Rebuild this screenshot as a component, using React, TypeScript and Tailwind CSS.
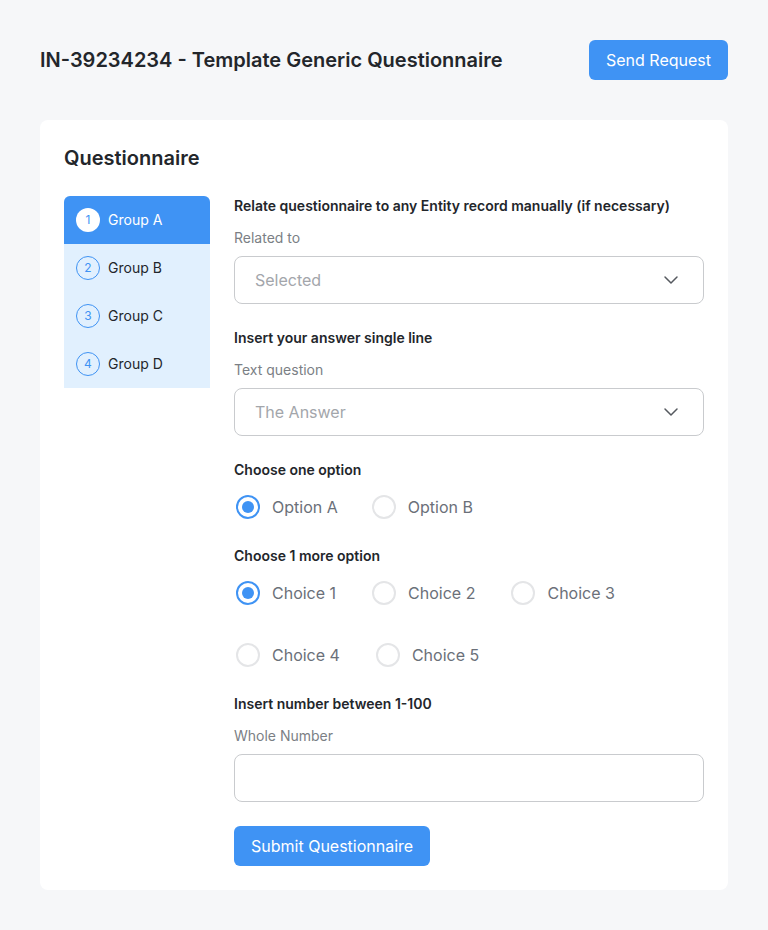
import { ChevronDown } from 'lucide-react'

const groups = ['Group A', 'Group B', 'Group C', 'Group D']

function Radio({ label, checked }: { label: string; checked?: boolean }) {
  return (
    <label className="flex h-[30px] items-center gap-3 pl-0.5">
      <span
        className={`flex h-6 w-6 items-center justify-center rounded-full border-2 ${
          checked ? 'border-[#3f93f4]' : 'border-[#e4e5e7]'
        }`}
      >
        {checked && <span className="h-3 w-3 rounded-full bg-[#3f93f4]" />}
      </span>
      <span className="text-base text-[#6b7079]">{label}</span>
    </label>
  )
}

function SelectBox({ placeholder }: { placeholder: string }) {
  return (
    <div className="flex h-12 items-center justify-between rounded-lg border border-[#c9cbce] pl-5 pr-5">
      <span className="text-base text-[#a3a6ab]">{placeholder}</span>
      <ChevronDown className="h-6 w-6 text-[#55595f]" strokeWidth={1.5} />
    </div>
  )
}

export default function App() {
  return (
    <div className="min-h-[930px] bg-[#f6f7f9] px-10 pt-10 pb-10 font-['Inter',sans-serif] text-[#23262b]">
      <div className="flex items-center justify-between">
        <h1 className="text-xl font-semibold">IN-39234234 - Template Generic Questionnaire</h1>
        <button className="h-10 rounded-md bg-[#3f93f4] px-[17px] text-base text-white">Send Request</button>
      </div>

      <div className="mt-10 rounded-lg bg-white p-6">
        <h2 className="text-xl font-semibold leading-7">Questionnaire</h2>

        <div className="mt-6 flex gap-6">
          <ul className="w-[146px] shrink-0 self-start overflow-hidden rounded-t-md bg-[#e1f0fe]">
            {groups.map((g, i) => (
              <li
                key={g}
                className={`flex h-12 items-center gap-2 px-3 text-sm ${
                  i === 0 ? 'bg-[#3f93f4] text-white' : 'text-[#23262b]'
                }`}
              >
                <span
                  className={`flex h-6 w-6 items-center justify-center rounded-full text-xs ${
                    i === 0 ? 'bg-white text-[#3f93f4]' : 'border border-[#3f93f4] text-[#3f93f4]'
                  }`}
                >
                  {i + 1}
                </span>
                {g}
              </li>
            ))}
          </ul>

          <div className="flex-1">
            <p className="text-sm font-semibold leading-5">Relate questionnaire to any Entity record manually (if necessary)</p>
            <p className="mt-3 mb-2 text-sm leading-5 text-[#7b7f85]">Related to</p>
            <SelectBox placeholder="Selected" />

            <p className="mt-6 text-sm font-semibold leading-5">Insert your answer single line</p>
            <p className="mt-3 mb-2 text-sm leading-5 text-[#7b7f85]">Text question</p>
            <SelectBox placeholder="The Answer" />

            <p className="mt-6 text-sm font-semibold leading-5">Choose one option</p>
            <div className="mt-3 flex flex-wrap gap-x-[32px]">
              <Radio label="Option A" checked />
              <Radio label="Option B" />
            </div>

            <p className="mt-6 text-sm font-semibold leading-5">Choose 1 more option</p>
            <div className="mt-3 flex flex-wrap gap-x-[34px] gap-y-8">
              <Radio label="Choice 1" checked />
              <Radio label="Choice 2" />
              <Radio label="Choice 3" />
              <Radio label="Choice 4" />
              <Radio label="Choice 5" />
            </div>

            <p className="mt-6 text-sm font-semibold leading-5">Insert number between 1-100</p>
            <p className="mt-3 mb-2 text-sm leading-5 text-[#7b7f85]">Whole Number</p>
            <div className="h-12 rounded-lg border border-[#c9cbce]" />

            <button className="mt-6 h-10 rounded-md bg-[#3f93f4] px-[17px] text-base text-white">Submit Questionnaire</button>
          </div>
        </div>
      </div>
    </div>
  )
}
